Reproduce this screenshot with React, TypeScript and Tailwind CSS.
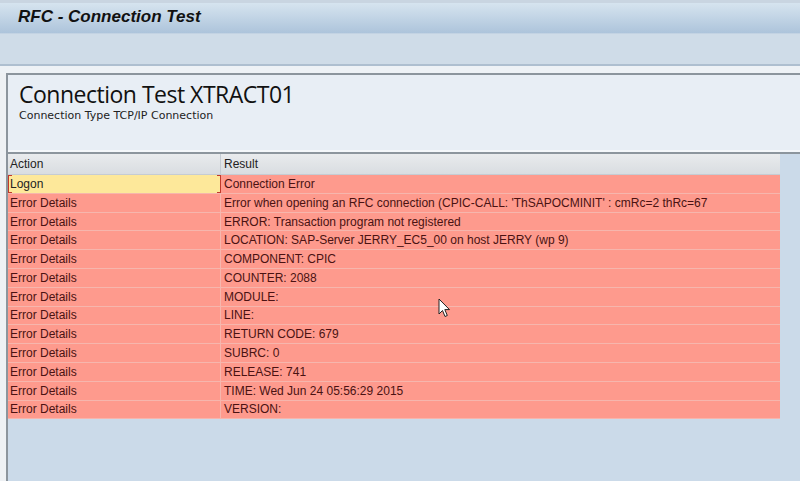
import React from 'react';

const rows: { action: string; result: string }[] = [
  { action: 'Logon', result: 'Connection Error' },
  { action: 'Error Details', result: "Error when opening an RFC connection (CPIC-CALL: 'ThSAPOCMINIT' : cmRc=2 thRc=67" },
  { action: 'Error Details', result: 'ERROR: Transaction program not registered' },
  { action: 'Error Details', result: 'LOCATION: SAP-Server JERRY_EC5_00 on host JERRY (wp 9)' },
  { action: 'Error Details', result: 'COMPONENT: CPIC' },
  { action: 'Error Details', result: 'COUNTER: 2088' },
  { action: 'Error Details', result: 'MODULE:' },
  { action: 'Error Details', result: 'LINE:' },
  { action: 'Error Details', result: 'RETURN CODE: 679' },
  { action: 'Error Details', result: 'SUBRC: 0' },
  { action: 'Error Details', result: 'RELEASE: 741' },
  { action: 'Error Details', result: 'TIME: Wed Jun 24 05:56:29 2015' },
  { action: 'Error Details', result: 'VERSION:' },
];

function Pointer() {
  return (
    <svg width="14" height="21" viewBox="0 0 14 21" className="absolute left-[438px] top-[298px]">
      <path d="M1 1 L1 16 L4.5 12.5 L7 18.5 L9.3 17.5 L6.8 11.6 L11.5 11.6 Z" fill="#fff" stroke="#222" strokeWidth="1" strokeLinejoin="round" />
    </svg>
  );
}

export default function App() {
  return (
    <div className="relative w-[800px] h-[481px] overflow-hidden bg-[#f3f5f7] flex flex-col" style={{ fontFamily: '"Liberation Sans", Arial, sans-serif' }}>
      {/* title bar */}
      <div className="h-[34px] shrink-0 border-t-[3px] border-[#c9d5e1] bg-gradient-to-b from-[#d6e4ef] to-[#adc4db] flex items-center pl-[18px] border-b border-b-[#c3d3e3]">
        <span className="text-[17px] font-bold italic text-[#111] -mt-[2px]">
          RFC - Connection Test
        </span>
      </div>
      {/* toolbar */}
      <div className="h-[32px] shrink-0 bg-[#cfdce8] border-b-2 border-[#aebfd0]" />
      <div className="h-[7px] shrink-0 bg-[#eef2f6]" />
      {/* main */}
      <div className="flex flex-1 min-h-0">
        <div className="w-[6px] bg-[#eef1f4] shrink-0" />
        <div className="flex-1 flex flex-col border-l-[2px] border-t-[2px] border-[#8c959d] min-h-0">
          <div className="h-[77px] shrink-0 bg-[#e8eef5] border-b-[2px] border-b-[#f4f7fa] pl-[11px] pt-[5px]">
            <div className="text-[23px] leading-[28px] text-[#111]" style={{ fontFamily: '"Open Sans", "Liberation Sans", sans-serif', letterSpacing: '-0.5px' }}>
              Connection Test XTRACT01
            </div>
            <div className="text-[11px] leading-[14px] text-[#222] mt-[1px]" style={{ fontFamily: '"DejaVu Sans", sans-serif' }}>
              Connection Type TCP/IP Connection
            </div>
          </div>
          <div className="h-[2px] shrink-0 bg-[#8c959d]" />
          <div className="flex-1 bg-[#cbdae9] min-h-0">
            <div className="w-[772px]">
              <div className="flex h-[21px] bg-gradient-to-b from-[#e9ebed] to-[#d9dde1] border-b border-[#c5ccd3] text-[12px] text-[#222]">
                <div className="w-[213px] pl-[2px] flex items-center border-r border-[#c5ccd3]">Action</div>
                <div className="flex-1 pl-[3px] flex items-center">Result</div>
              </div>
              {rows.map((r, i) => (
                <div key={i} className="flex h-[18.8px] bg-[#fe9a8d] border-b border-[#f6b6ad] text-[12px] text-[#4a1212]">
                  {i === 0 ? (
                    <div className="relative w-[213px] pl-[2px] flex items-center bg-[#fde89a] text-[#222]">
                      <span className="absolute left-0 top-0 w-[4px] h-full border-l border-t border-b border-[#c0392b]" />
                      <span className="absolute right-0 top-0 w-[4px] h-full border-r border-t border-b border-[#c0392b]" />
                      {r.action}
                    </div>
                  ) : (
                    <div className="w-[213px] pl-[2px] flex items-center border-r border-[#f6b6ad]">{r.action}</div>
                  )}
                  <div className="flex-1 pl-[3px] flex items-center whitespace-nowrap overflow-hidden">{r.result}</div>
                </div>
              ))}
            </div>
          </div>
        </div>
      </div>
      <Pointer />
    </div>
  );
}
